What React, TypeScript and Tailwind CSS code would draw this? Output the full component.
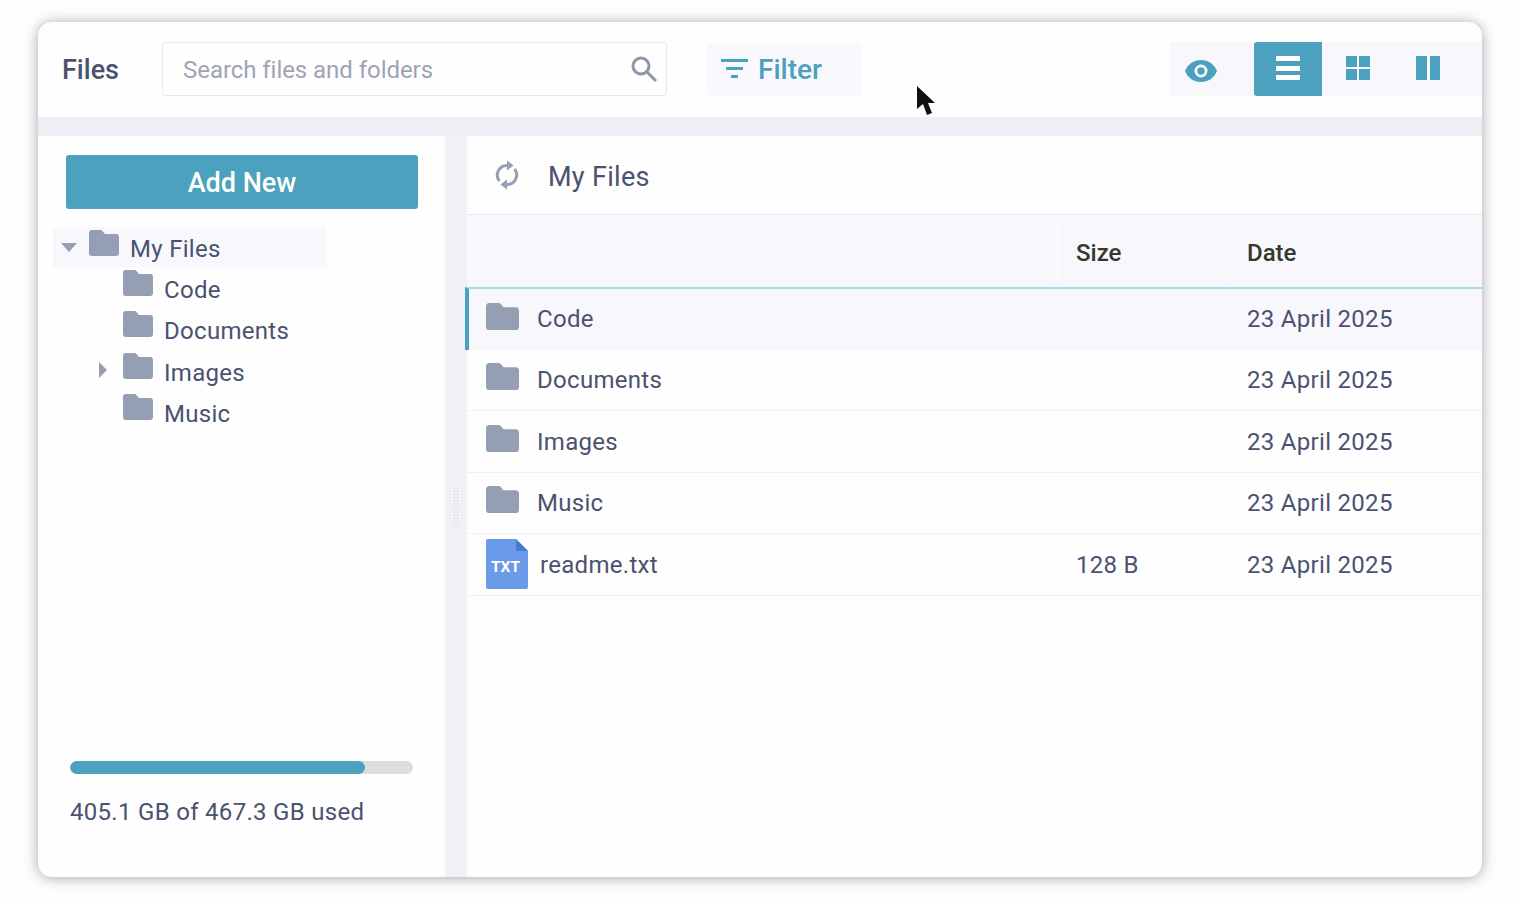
const TREE = [
  { name: 'Code', caret: false },
  { name: 'Documents', caret: false },
  { name: 'Images', caret: true },
  { name: 'Music', caret: false },
]

const ROWS = ['Code', 'Documents', 'Images', 'Music']

function Folder({ className }: { className: string }) {
  return (
    <svg viewBox="0 0 33 26" preserveAspectRatio="none" className={className} fill="#959fb3">
      <path d="M3 0h9.5c1 0 1.700.4 2.300 1l2.700 3H30c1.700 0 3 1.300 3 3v16c0 1.700-1.300 3-3 3H3c-1.700 0-3-1.300-3-3V3c0-1.700 1.300-3 3-3z" />
    </svg>
  )
}

function TxtIcon() {
  return (
    <div className="relative h-[50px] w-[42px] shrink-0">
      <svg viewBox="0 0 42 50" className="h-[50px] w-[42px]">
        <path d="M2 0h28l12 12v36a2 2 0 0 1-2 2H2a2 2 0 0 1-2-2V2a2 2 0 0 1 2-2z" fill="#6b9ae8" />
        <path d="M30 0l12 12H32a2 2 0 0 1-2-2z" fill="#4a7ad0" />
      </svg>
      <span className="absolute left-[5px] top-[19px] text-[15.500px] font-bold leading-[18px] text-white">TXT</span>
    </div>
  )
}

export default function App() {
  return (
    <div className="h-[900px] w-[1520px] overflow-hidden bg-[#fefefe] pl-[38px] pt-[22px] font-['Roboto',sans-serif]">
      <div className="relative flex h-[855px] w-[1444px] flex-col overflow-hidden rounded-[14px] bg-[#fefefe] text-[#4a5270] shadow-[0_1px_14px_rgba(60,60,70,0.45)]">
        {/* top bar */}
        <div className="flex h-[95px] shrink-0 items-start pt-[20px]">
          <div className="flex h-[54px] w-[124px] items-center pl-[24px] pt-[2px] text-[27px] font-medium text-[#4a5270]">Files</div>
          <div className="flex h-[54px] w-[505px] items-center justify-between rounded-[3px] border border-[#e6e8f2] pl-[20px] pr-[9px]">
            <span className="pt-[1px] text-[24px] tracking-[-0.05px] text-[#9ea3b5]">Search files and folders</span>
            <svg viewBox="0 0 26 26" className="h-[26px] w-[26px]" fill="none" stroke="#8f96aa" strokeWidth="3">
              <circle cx="10" cy="10" r="8" />
              <path d="M16 16l9 9" />
            </svg>
          </div>
          <div className="ml-[40px] mt-[1px] flex h-[52px] w-[155px] items-center gap-[10px] bg-[#f9f9fd] pl-[14px] text-[#4ba1be]">
            <svg viewBox="0 0 27 20" className="h-[20px] w-[27px]" fill="currentColor">
              <rect x="0" y="0" width="27" height="3" />
              <rect x="5" y="8" width="17" height="3" />
              <rect x="10" y="16" width="7" height="3" />
            </svg>
            <span className="pt-[2px] text-[28px] font-medium leading-none">Filter</span>
          </div>
          <div className="ml-auto flex h-[54px] items-center bg-[#f8f8fc] pr-[20px]">
            <div className="flex h-[54px] w-[84px] items-center justify-start pl-[15px] pt-[3px]">
              <svg viewBox="0 0 32 22" className="h-[22px] w-[32px]" fill="#4ba1be">
                <path fillRule="evenodd" d="M16 0c7.500 0 13.500 4.500 16 11-2.500 6.500-8.500 11-16 11S2.500 17.500 0 11C2.500 4.500 8.500 0 16 0zm0 4.500a6.500 6.500 0 1 0 0 13 6.500 6.500 0 0 0 0-13zm0 2.800a3.700 3.700 0 1 1 0 7.400 3.700 3.700 0 0 1 0-7.400z" />
              </svg>
            </div>
            <div className="flex h-[54px] w-[68px] items-center justify-center rounded-l-[3px] bg-[#4ba1be] pb-[2px]">
              <div className="flex h-[24px] w-[24px] flex-col justify-between">
                <div className="h-[5px] bg-white" />
                <div className="h-[5px] bg-white" />
                <div className="h-[5px] bg-white" />
              </div>
            </div>
            <div className="flex h-[54px] w-[72px] items-center justify-center pb-[2px]">
              <div className="grid h-[24px] w-[24px] grid-cols-2 gap-[2px]">
                <div className="bg-[#4ba1be]" />
                <div className="bg-[#4ba1be]" />
                <div className="bg-[#4ba1be]" />
                <div className="bg-[#4ba1be]" />
              </div>
            </div>
            <div className="flex h-[54px] w-[68px] items-center justify-center pb-[2px]">
              <div className="flex h-[24px] w-[24px] gap-[3px]">
                <div className="flex-1 bg-[#4ba1be]" />
                <div className="flex-1 bg-[#4ba1be]" />
              </div>
            </div>
          </div>
        </div>
        <div className="h-[19px] shrink-0 bg-[#eeeef4]" />

        <div className="flex min-h-0 flex-1">
          {/* sidebar */}
          <div className="flex w-[407px] shrink-0 flex-col pt-[19px]">
            <div className="ml-[28px] flex h-[54px] w-[352px] items-center justify-center rounded-[3px] bg-[#4ba1be] pt-[2px] text-[27px] font-medium text-white">
              Add New
            </div>
            <div className="ml-[15px] mt-[18px] flex h-[40px] w-[273px] items-center bg-[#f7f7fc]">
              <span className="ml-[8px] h-0 w-0 border-x-[8px] border-t-[9px] border-x-transparent border-t-[#959fb3]" />
              <Folder className="mb-[8px] ml-[12px] h-[26px] w-[30px]" />
              <span className="ml-[11px] pt-[4px] text-[24px] tracking-[0.3px]">My Files</span>
            </div>
            <div className="flex flex-col">
              {TREE.map(item => (
                <div key={item.name} className="flex h-[41.500px] items-center pl-[60px]">
                  <span className="flex w-[25px] justify-start pl-[1px]">
                    {item.caret && (
                      <span className="mb-[2px] h-0 w-0 border-y-[8px] border-l-[8px] border-y-transparent border-l-[#959fb3]" />
                    )}
                  </span>
                  <Folder className="mb-[10px] h-[26px] w-[30px]" />
                  <span className="ml-[11px] pt-[4px] text-[24px] tracking-[0.3px]">{item.name}</span>
                </div>
              ))}
            </div>
            <div className="mt-auto pb-[50px] pl-[32px]">
              <div className="h-[13px] w-[343px] overflow-hidden rounded-full bg-[#dddde0]">
                <div className="h-full rounded-full bg-[#4ba1be]" style={{ width: `${(295 / 343) * 100}%` }} />
              </div>
              <p className="mt-[23px] text-[24px] leading-[30px] tracking-[0.3px]">405.1 GB of 467.3 GB used</p>
            </div>
          </div>

          {/* splitter */}
          <div className="flex w-[22px] shrink-0 items-center justify-center bg-[#f0f0f6]">
            <div className="h-[40px] w-[6px] bg-[radial-gradient(#c9c9d2_1px,transparent_1px)] bg-[length:3px_3px]" />
          </div>

          {/* listing */}
          <div className="flex min-w-0 flex-1 flex-col">
            <div className="flex h-[79px] shrink-0 items-center border-b border-[#e8e8ee] pl-[28px]">
              <svg viewBox="0 0 24 30" className="h-[30px] w-[24px]" fill="none" stroke="#959fb3" strokeWidth="3">
                <path d="M4.500 21A9.500 9.500 0 0 1 12 5.500" />
                <path d="M19.500 9A9.500 9.500 0 0 1 12 24.500" />
                <path d="M12 0.500L18.500 5.500L12 10.500z" fill="#959fb3" stroke="none" />
                <path d="M12 19.500L5.500 24.500L12 29.500z" fill="#959fb3" stroke="none" />
              </svg>
              <span className="ml-[29px] pt-[5px] text-[27px] tracking-[0.3px]">My Files</span>
            </div>
            <div className="flex h-[72px] shrink-0 items-center bg-[#f7f7fc] text-[24px] font-medium text-[#33382e]">
              <div className="ml-[587px] h-[60px] w-[6px] bg-[#fafafd]" />
              <span className="ml-[16px] w-[150px] pt-[3px]">Size</span>
              <div className="h-[60px] w-[6px] bg-[#fafafd]" />
              <span className="ml-[15px] pt-[3px]">Date</span>
            </div>
            {ROWS.map((name, i) => (
              <div
                key={name}
                className={
                  i === 0
                    ? 'flex h-[62.500px] shrink-0 items-center border-l-[4px] border-t-2 border-l-[#4ba1be] border-t-[#a9d9ea] bg-[#f7f7fc] -ml-[2px] pl-[17px]'
                    : 'flex h-[61.500px] shrink-0 items-center border-b border-[#f0f0f4] pl-[19px]'
                }
              >
                <Folder className="mb-[6px] h-[27px] w-[33px]" />
                <span className={i === 0 ? 'ml-[18px] w-[710px] text-[24px] tracking-[0.3px]' : 'ml-[18px] w-[710px] pt-[1px] text-[24px] tracking-[0.3px]'}>{name}</span>
                <span className={i === 0 ? 'text-[24px] tracking-[0.3px]' : 'pt-[1px] text-[24px] tracking-[0.3px]'}>23 April 2025</span>
              </div>
            ))}
            <div className="flex h-[61.500px] shrink-0 items-center border-b border-[#f0f0f4] pl-[19px]">
              <TxtIcon />
              <span className="ml-[12px] w-[536px] pt-[1px] text-[24px] tracking-[0.3px]">readme.txt</span>
              <span className="w-[171px] pt-[1px] text-[24px] tracking-[0.3px]">128 B</span>
              <span className="pt-[1px] text-[24px] tracking-[0.3px]">23 April 2025</span>
            </div>
          </div>
        </div>

        {/* mouse pointer */}
        <svg viewBox="0 0 20 32" className="absolute left-[878px] top-[63px] h-[32px] w-[20px]" fill="#111">
          <path d="M1 1v23l6-5 4 11 5-2-4-10h7z" />
        </svg>
      </div>
    </div>
  )
}
